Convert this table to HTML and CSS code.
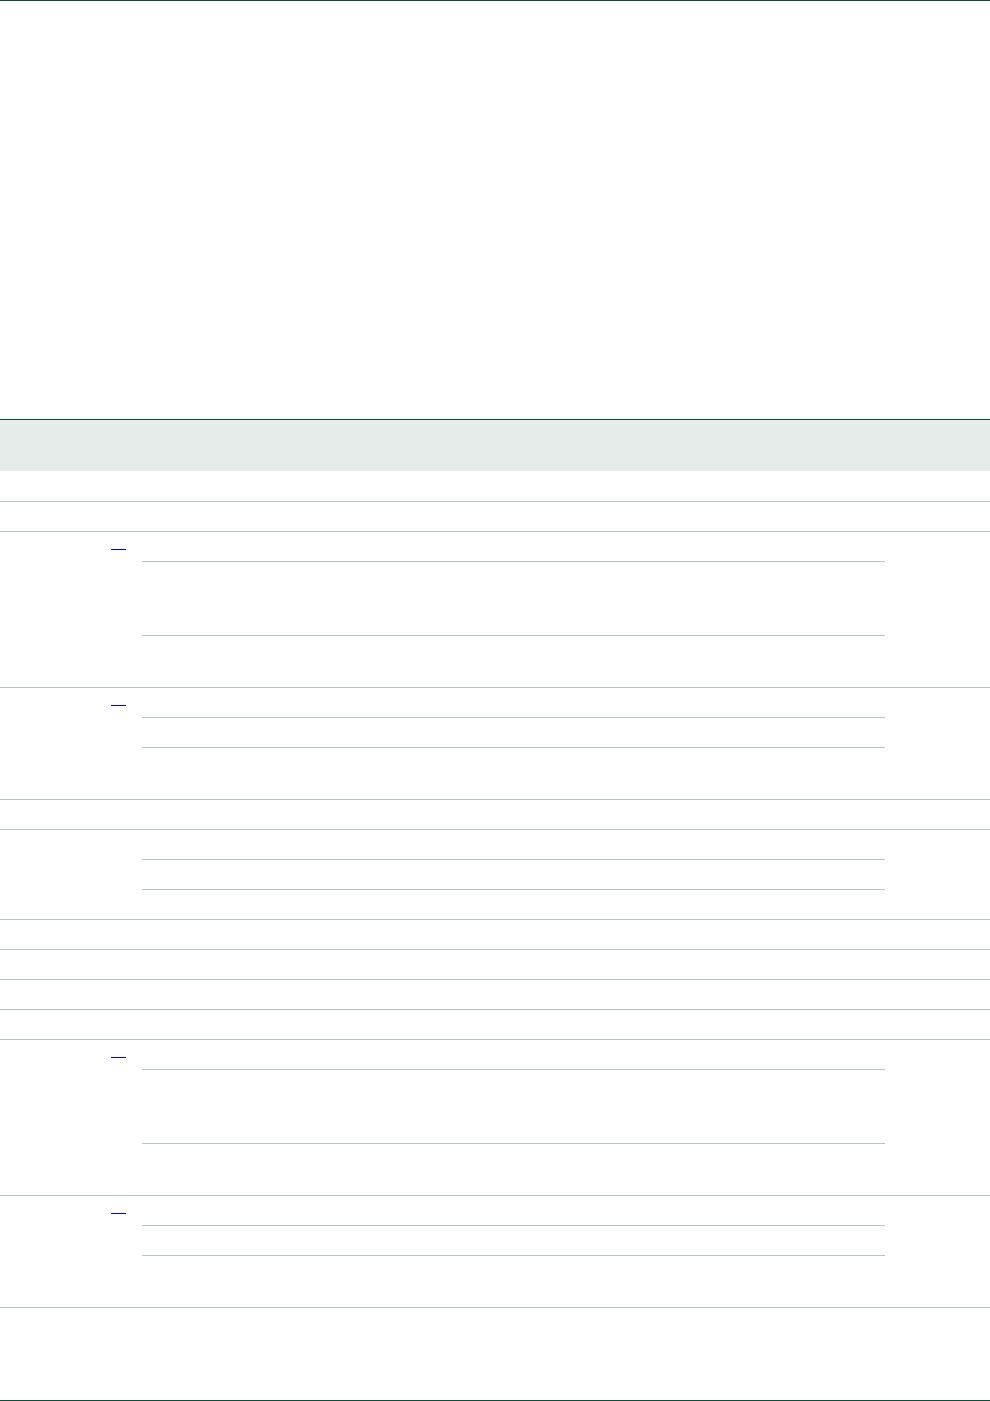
FILE: index.html
```html
<!DOCTYPE html>
<html lang="en">
<head>
    <meta charset="UTF-8">
    <meta name="viewport" content="width=device-width, initial-scale=1.0">
    <title>Specification</title>
    <link rel="stylesheet" href="styles.css">
</head>
<body>
    <!-- Top rule -->
    <div class="page-rule"></div>

    <!-- Intro area (blank) -->
    <div class="intro"></div>

    <!-- Spec table -->
    <div class="spec">
        <div class="spec-head"></div>
        <div class="spec-row first"></div>
        <div class="spec-row"></div>

        <div class="spec-group">
            <div class="group-toggle"><a href="#" class="toggle"></a></div>
            <div class="sub-list">
                <div class="sub-row"></div>
                <div class="sub-row tall"></div>
                <div class="sub-row last"></div>
            </div>
            <div class="group-side"></div>
        </div>

        <div class="spec-group">
            <div class="group-toggle"><a href="#" class="toggle"></a></div>
            <div class="sub-list">
                <div class="sub-row"></div>
                <div class="sub-row"></div>
                <div class="sub-row last"></div>
            </div>
            <div class="group-side"></div>
        </div>

        <div class="spec-row"></div>

        <div class="spec-group">
            <div class="group-toggle"></div>
            <div class="sub-list">
                <div class="sub-row"></div>
                <div class="sub-row"></div>
                <div class="sub-row"></div>
            </div>
            <div class="group-side"></div>
        </div>

        <div class="spec-row"></div>
        <div class="spec-row"></div>
        <div class="spec-row"></div>
        <div class="spec-row"></div>

        <div class="spec-group">
            <div class="group-toggle"><a href="#" class="toggle"></a></div>
            <div class="sub-list">
                <div class="sub-row"></div>
                <div class="sub-row tall"></div>
                <div class="sub-row last"></div>
            </div>
            <div class="group-side"></div>
        </div>

        <div class="spec-group">
            <div class="group-toggle"><a href="#" class="toggle"></a></div>
            <div class="sub-list">
                <div class="sub-row"></div>
                <div class="sub-row"></div>
                <div class="sub-row last"></div>
            </div>
            <div class="group-side"></div>
        </div>
    </div>

    <!-- Bottom rule -->
    <div class="page-rule bottom"></div>
</body>
</html>
```

FILE: styles.css
```css
/* General Styles */
body {
    font-family: "Liberation Sans", Arial, sans-serif;
    background: #ffffff;
    margin: 0;
    padding: 0;
    color: #333;
    min-height: 100vh;
    display: flex;
    flex-direction: column;
}

/* Page rules */
.page-rule {
    height: 1px;
    background-color: #0b4d3b;
    flex: 0 0 auto;
}

.page-rule.bottom {
    margin-top: auto;
}

.intro {
    height: 418px;
}

/* Spec Table */
.spec {
    border-top: 1px solid #0b4d3b;
}

.spec-head {
    height: 51px;
    background-color: #e6ecea;
}

.spec-row {
    height: 29px;
    border-bottom: 1px solid #b8c6c1;
}

.spec-row.first {
    height: 30px;
}

/* Grouped rows with nested list */
.spec-group {
    display: grid;
    grid-template-columns: 142px 743px 1fr;
    border-bottom: 1px solid #b8c6c1;
}

.group-toggle {
    display: flex;
    justify-content: flex-end;
    align-items: flex-start;
    padding: 17px 16px 0 0;
}

.toggle {
    display: block;
    width: 15px;
    height: 1px;
    background-color: #0000cc;
}

.sub-row {
    height: 29px;
    border-bottom: 1px solid #b8c6c1;
}

.sub-row.tall {
    height: 73px;
}

.sub-row.last {
    height: 51px;
    border-bottom: none;
}

.sub-row:last-child {
    border-bottom: none;
}
```
